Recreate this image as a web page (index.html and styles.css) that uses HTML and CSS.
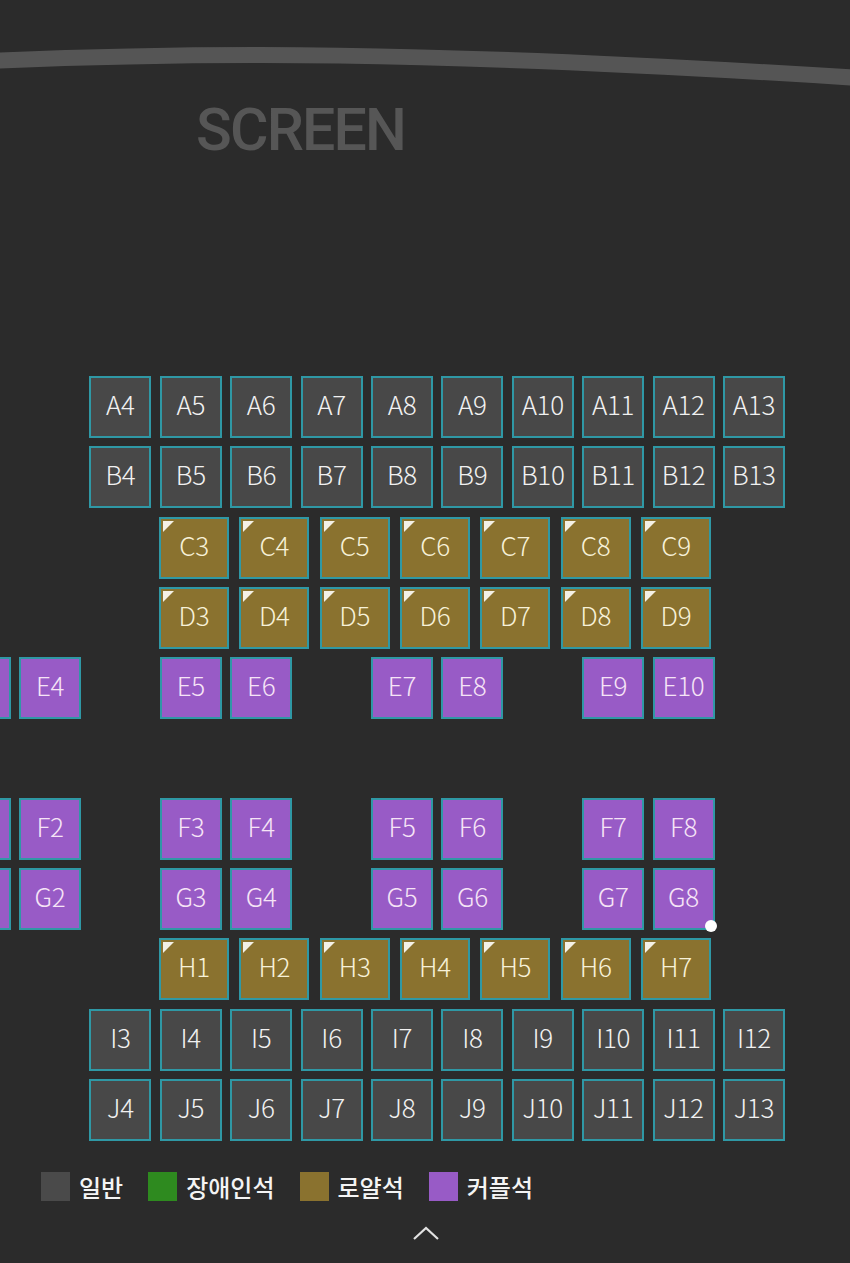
FILE: index.html
```html
<!DOCTYPE html>
<html lang="ko">
<head>
<meta charset="utf-8">
<title>좌석 선택</title>
<link rel="stylesheet" href="styles.css">
</head>
<body>
<div class="page">
  <svg class="curve" width="850" height="100" viewBox="0 0 850 100" aria-hidden="true">
    <path d="M -10 61 C 200 52, 420 50, 860 78" fill="none" stroke="#555555" stroke-width="16"/>
  </svg>
  <div class="screen-title">SCREEN</div>

  <div class="seatmap">
    <div class="row">
      <div class="gap"></div><div class="gap"></div>
      <div class="seat normal">A4</div><div class="seat normal">A5</div><div class="seat normal">A6</div><div class="seat normal">A7</div><div class="seat normal">A8</div><div class="seat normal">A9</div><div class="seat normal">A10</div><div class="seat normal">A11</div><div class="seat normal">A12</div><div class="seat normal">A13</div>
    </div>
    <div class="row">
      <div class="gap"></div><div class="gap"></div>
      <div class="seat normal">B4</div><div class="seat normal">B5</div><div class="seat normal">B6</div><div class="seat normal">B7</div><div class="seat normal">B8</div><div class="seat normal">B9</div><div class="seat normal">B10</div><div class="seat normal">B11</div><div class="seat normal">B12</div><div class="seat normal">B13</div>
    </div>
    <div class="row royal-row">
      <div class="seat royal">C3</div><div class="seat royal">C4</div><div class="seat royal">C5</div><div class="seat royal">C6</div><div class="seat royal">C7</div><div class="seat royal">C8</div><div class="seat royal">C9</div>
    </div>
    <div class="row royal-row">
      <div class="seat royal">D3</div><div class="seat royal">D4</div><div class="seat royal">D5</div><div class="seat royal">D6</div><div class="seat royal">D7</div><div class="seat royal">D8</div><div class="seat royal">D9</div>
    </div>
    <div class="row">
      <div class="seat couple"></div><div class="seat couple">E4</div><div class="gap"></div>
      <div class="seat couple">E5</div><div class="seat couple">E6</div><div class="gap"></div>
      <div class="seat couple">E7</div><div class="seat couple">E8</div><div class="gap"></div>
      <div class="seat couple">E9</div><div class="seat couple">E10</div>
    </div>
    <div class="row empty-row"></div>
    <div class="row">
      <div class="seat couple"></div><div class="seat couple">F2</div><div class="gap"></div>
      <div class="seat couple">F3</div><div class="seat couple">F4</div><div class="gap"></div>
      <div class="seat couple">F5</div><div class="seat couple">F6</div><div class="gap"></div>
      <div class="seat couple">F7</div><div class="seat couple">F8</div>
    </div>
    <div class="row">
      <div class="seat couple"></div><div class="seat couple">G2</div><div class="gap"></div>
      <div class="seat couple">G3</div><div class="seat couple">G4</div><div class="gap"></div>
      <div class="seat couple">G5</div><div class="seat couple">G6</div><div class="gap"></div>
      <div class="seat couple">G7</div><div class="seat couple marked">G8<span class="dot"></span></div>
    </div>
    <div class="row royal-row">
      <div class="seat royal">H1</div><div class="seat royal">H2</div><div class="seat royal">H3</div><div class="seat royal">H4</div><div class="seat royal">H5</div><div class="seat royal">H6</div><div class="seat royal">H7</div>
    </div>
    <div class="row">
      <div class="gap"></div><div class="gap"></div>
      <div class="seat normal">I3</div><div class="seat normal">I4</div><div class="seat normal">I5</div><div class="seat normal">I6</div><div class="seat normal">I7</div><div class="seat normal">I8</div><div class="seat normal">I9</div><div class="seat normal">I10</div><div class="seat normal">I11</div><div class="seat normal">I12</div>
    </div>
    <div class="row">
      <div class="gap"></div><div class="gap"></div>
      <div class="seat normal">J4</div><div class="seat normal">J5</div><div class="seat normal">J6</div><div class="seat normal">J7</div><div class="seat normal">J8</div><div class="seat normal">J9</div><div class="seat normal">J10</div><div class="seat normal">J11</div><div class="seat normal">J12</div><div class="seat normal">J13</div>
    </div>
  </div>

  <div class="legend">
    <div class="legend-item"><span class="swatch sw-normal"></span><span class="legend-label">일반</span></div>
    <div class="legend-item"><span class="swatch sw-disabled"></span><span class="legend-label">장애인석</span></div>
    <div class="legend-item"><span class="swatch sw-royal"></span><span class="legend-label">로얄석</span></div>
    <div class="legend-item"><span class="swatch sw-couple"></span><span class="legend-label">커플석</span></div>
  </div>

  <div class="toggle">
    <svg width="28" height="16" viewBox="0 0 28 16" aria-hidden="true">
      <path d="M 2 14 L 14 3 L 26 14" fill="none" stroke="#e2e2e2" stroke-width="2.2"/>
    </svg>
  </div>
</div>
</body>
</html>
```

FILE: styles.css
```css
html, body {
  margin: 0;
  padding: 0;
  background: #2b2b2b;
}

.page {
  width: 850px;
  height: 1263px;
  overflow: hidden;
  background: #2b2b2b;
  font-family: "Noto Sans CJK KR", "Noto Sans", sans-serif;
}

.curve {
  display: block;
}

.screen-title {
  margin-left: 196px;
  font-family: Roboto, "Liberation Sans", sans-serif;
  font-weight: 500;
  font-size: 59px;
  line-height: 60px;
  color: #565656;
  letter-spacing: -1.8px;
}

.seatmap {
  margin-top: 216px;
  margin-left: -51.4px;
  display: flex;
  flex-direction: column;
  gap: 8.3px;
}

.row {
  display: flex;
  gap: 8.4px;
  height: 62px;
}

.royal-row {
  margin-left: 210.4px;
  gap: 10.33px;
}

.gap {
  width: 62px;
  flex: none;
}

.seat {
  position: relative;
  flex: none;
  width: 62px;
  height: 62px;
  box-sizing: border-box;
  border: 2px solid #2f98a5;
  padding-bottom: 7px;
  display: flex;
  align-items: center;
  justify-content: center;
  font-size: 26px;
  font-weight: 300;
  color: #f1f1f1;
  letter-spacing: -0.3px;
}

.normal {
  background: #484848;
}

.couple {
  background: #985bc6;
  color: #f6e4f6;
}

.royal {
  width: 70px;
  background: #8a722f;
  color: #f7f1d8;
}

.royal::before {
  content: "";
  position: absolute;
  top: 2px;
  left: 2px;
  width: 0;
  height: 0;
  border-top: 11px solid #f4f1e6;
  border-right: 11px solid transparent;
}

.dot {
  position: absolute;
  right: -4px;
  bottom: -4px;
  width: 12px;
  height: 12px;
  border-radius: 50%;
  background: #ffffff;
}

.legend {
  margin-top: 31px;
  margin-left: 41px;
  display: flex;
  align-items: center;
  gap: 25px;
  height: 30px;
}

.legend-item {
  display: flex;
  align-items: center;
  gap: 9px;
}

.swatch {
  width: 29px;
  height: 29px;
  display: block;
}

.sw-normal { background: #4a4a4a; }
.sw-disabled { background: #2e8a1f; }
.sw-royal { background: #8a722f; }
.sw-couple { background: #985bc6; }

.legend-label {
  font-size: 24px;
  font-weight: 500;
  color: #f4f4f4;
  line-height: 30px;
}

.toggle {
  display: flex;
  justify-content: center;
  margin-top: 23px;
  margin-left: 2px;
}

.toggle svg {
  display: block;
}
```
